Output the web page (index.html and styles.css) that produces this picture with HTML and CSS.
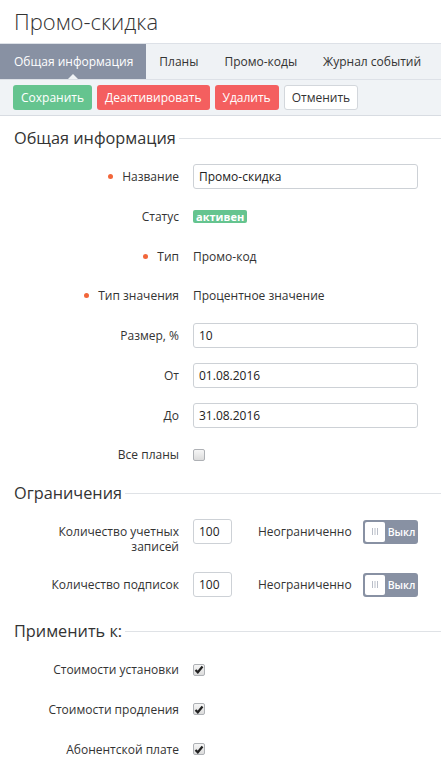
FILE: index.html
```html
<!DOCTYPE html>
<html>
<head>
    <meta charset="utf-8">
    <title>Промо-скидка</title>
    <link rel="stylesheet" href="styles.css">
</head>
<body>
    <h1 class="page-title">Промо-скидка</h1>

    <div class="tabs">
        <a class="tab active">Общая информация</a>
        <a class="tab">Планы</a>
        <a class="tab">Промо-коды</a>
        <a class="tab">Журнал событий</a>
    </div>

    <div class="toolbar">
        <button class="btn btn-green">Сохранить</button>
        <button class="btn btn-red">Деактивировать</button>
        <button class="btn btn-red">Удалить</button>
        <button class="btn btn-default">Отменить</button>
    </div>

    <div class="section section-first">
        <h2 class="section-title">Общая информация</h2>

        <div class="row">
            <label class="row-label required">Название</label>
            <div class="row-field"><input class="input" type="text" value="Промо-скидка"></div>
        </div>
        <div class="row">
            <label class="row-label">Статус</label>
            <div class="row-field"><span class="badge">активен</span></div>
        </div>
        <div class="row">
            <label class="row-label required">Тип</label>
            <div class="row-field text-value">Промо-код</div>
        </div>
        <div class="row">
            <label class="row-label required">Тип значения</label>
            <div class="row-field text-value">Процентное значение</div>
        </div>
        <div class="row">
            <label class="row-label">Размер, %</label>
            <div class="row-field"><input class="input" type="text" value="10"></div>
        </div>
        <div class="row">
            <label class="row-label">От</label>
            <div class="row-field"><input class="input" type="text" value="01.08.2016"></div>
        </div>
        <div class="row">
            <label class="row-label">До</label>
            <div class="row-field"><input class="input" type="text" value="31.08.2016"></div>
        </div>
        <div class="row">
            <label class="row-label">Все планы</label>
            <div class="row-field"><span class="check"></span></div>
        </div>
    </div>

    <div class="section section-limits">
        <h2 class="section-title">Ограничения</h2>

        <div class="row">
            <label class="row-label">Количество учетных записей</label>
            <div class="row-field limit">
                <input class="input input-small" type="text" value="100">
                <span class="limit-text">Неограниченно</span>
                <span class="toggle">
                    <span class="toggle-knob">
                        <svg width="8" height="7" viewBox="0 0 8 7"><path d="M1.5 0v7M4 0v7M6.5 0v7" stroke="#b9bec8" stroke-width="1"/></svg>
                    </span>
                    <span class="toggle-text">Выкл</span>
                </span>
            </div>
        </div>
        <div class="row">
            <label class="row-label">Количество подписок</label>
            <div class="row-field limit">
                <input class="input input-small" type="text" value="100">
                <span class="limit-text">Неограниченно</span>
                <span class="toggle">
                    <span class="toggle-knob">
                        <svg width="8" height="7" viewBox="0 0 8 7"><path d="M1.5 0v7M4 0v7M6.5 0v7" stroke="#b9bec8" stroke-width="1"/></svg>
                    </span>
                    <span class="toggle-text">Выкл</span>
                </span>
            </div>
        </div>
    </div>

    <div class="section">
        <h2 class="section-title">Применить к:</h2>

        <div class="row">
            <label class="row-label">Стоимости установки</label>
            <div class="row-field"><span class="check checked"><svg width="10" height="9" viewBox="0 0 10 9"><path d="M1.5 5l2.3 2.3L8.5 1.5" fill="none" stroke="#222" stroke-width="2.2"/></svg></span></div>
        </div>
        <div class="row">
            <label class="row-label">Стоимости продления</label>
            <div class="row-field"><span class="check checked"><svg width="10" height="9" viewBox="0 0 10 9"><path d="M1.5 5l2.3 2.3L8.5 1.5" fill="none" stroke="#222" stroke-width="2.2"/></svg></span></div>
        </div>
        <div class="row">
            <label class="row-label">Абонентской плате</label>
            <div class="row-field"><span class="check checked"><svg width="10" height="9" viewBox="0 0 10 9"><path d="M1.5 5l2.3 2.3L8.5 1.5" fill="none" stroke="#222" stroke-width="2.2"/></svg></span></div>
        </div>
    </div>
</body>
</html>
```

FILE: styles.css
```css
body {
    margin: 0;
    font-family: "Open Sans", "Liberation Sans", Arial, sans-serif;
    font-size: 12px;
    color: #333;
    background: #fff;
}

.page-title {
    margin: 0;
    padding: 6px 14px 7px;
    font-size: 22px;
    font-weight: 300;
    line-height: 30px;
    color: #333;
}

.tabs {
    display: flex;
    background-color: #eff2f5;
    border-top: 1px solid #dde1e7;
    border-bottom: 1px solid #dde1e7;
}

.tab {
    position: relative;
    padding: 0 13px;
    line-height: 35px;
    white-space: nowrap;
    color: #333;
}

.tab.active {
    padding: 0 13px 0 14px;
    background-color: #8891a3;
    color: #fff;
}

/* little arrow under active tab */
.tab.active::after {
    content: "";
    position: absolute;
    left: 50%;
    bottom: 0;
    margin-left: -5px;
    border: 5px solid transparent;
    border-bottom-color: #f0f3f6;
    border-top-width: 0;
}

.toolbar {
    display: flex;
    gap: 5px;
    padding: 5px 13px;
    background-color: #f0f3f6;
    border-bottom: 1px solid #d8dce2;
}

.btn {
    height: 25px;
    padding: 0 7px;
    border: 1px solid transparent;
    border-radius: 3px;
    font-family: inherit;
    font-size: 12px;
    color: #fff;
    cursor: pointer;
}

.btn-green {
    background-color: #65c48f;
}

.btn-red {
    background-color: #f45f5f;
}

.btn-default {
    background-color: #fff;
    border-color: #d3d7dc;
    color: #333;
}

.section-title {
    display: flex;
    align-items: center;
    gap: 3px;
    margin: 14px 0 14px 14px;
    font-size: 16.3px;
    font-weight: 400;
    line-height: 24px;
}

.section-first .section-title {
    margin-top: 10px;
}

.section-title::after {
    content: "";
    flex: 1;
    height: 1px;
    background-color: #dfe2e6;
}

.section-limits {
    padding-bottom: 8px;
}

.row {
    display: grid;
    grid-template-columns: 179px 225px;
    column-gap: 14px;
    align-items: start;
    min-height: 25px;
    margin-bottom: 14.75px;
}

.section .row:last-child {
    margin-bottom: 0;
}

.row-label {
    padding: 5px 0 3px 40px;
    line-height: 15px;
    text-align: right;
    color: #333;
}

.row-label.required::before {
    content: "";
    display: inline-block;
    width: 5px;
    height: 5px;
    margin-right: 9px;
    border-radius: 50%;
    background-color: #f2663a;
    vertical-align: 2px;
}

.row-field {
    display: flex;
    align-items: center;
    min-height: 25px;
}

.text-value {
    color: #333;
}

.input {
    box-sizing: border-box;
    width: 100%;
    height: 25px;
    padding: 0 5px;
    border: 1px solid #cdd1d6;
    border-radius: 3px;
    font-family: inherit;
    font-size: 12px;
    color: #222;
}

.input-small {
    width: 39px;
}

.badge {
    padding: 0 3px;
    border-radius: 2px;
    background-color: #65c48f;
    color: #fff;
    font-size: 11px;
    font-weight: 700;
    line-height: 13px;
}

.limit-text {
    width: 106px;
    margin-left: 26px;
    color: #333;
}

.toggle {
    box-sizing: border-box;
    display: flex;
    align-items: center;
    width: 56px;
    height: 24px;
    padding: 2px;
    border-radius: 3px;
    background-color: #8891a3;
}

.toggle-knob {
    display: flex;
    align-items: center;
    justify-content: center;
    width: 20px;
    height: 20px;
    border-radius: 2px;
    background-color: #fff;
}

.toggle-text {
    margin-left: 3px;
    color: #fff;
    font-size: 10.5px;
    font-weight: 600;
}

.check {
    box-sizing: border-box;
    display: flex;
    align-items: center;
    justify-content: center;
    width: 12px;
    height: 12px;
    border: 1px solid #aeb1b5;
    border-radius: 2px;
    background: linear-gradient(#f6f6f6, #dcdcdc);
}
```
